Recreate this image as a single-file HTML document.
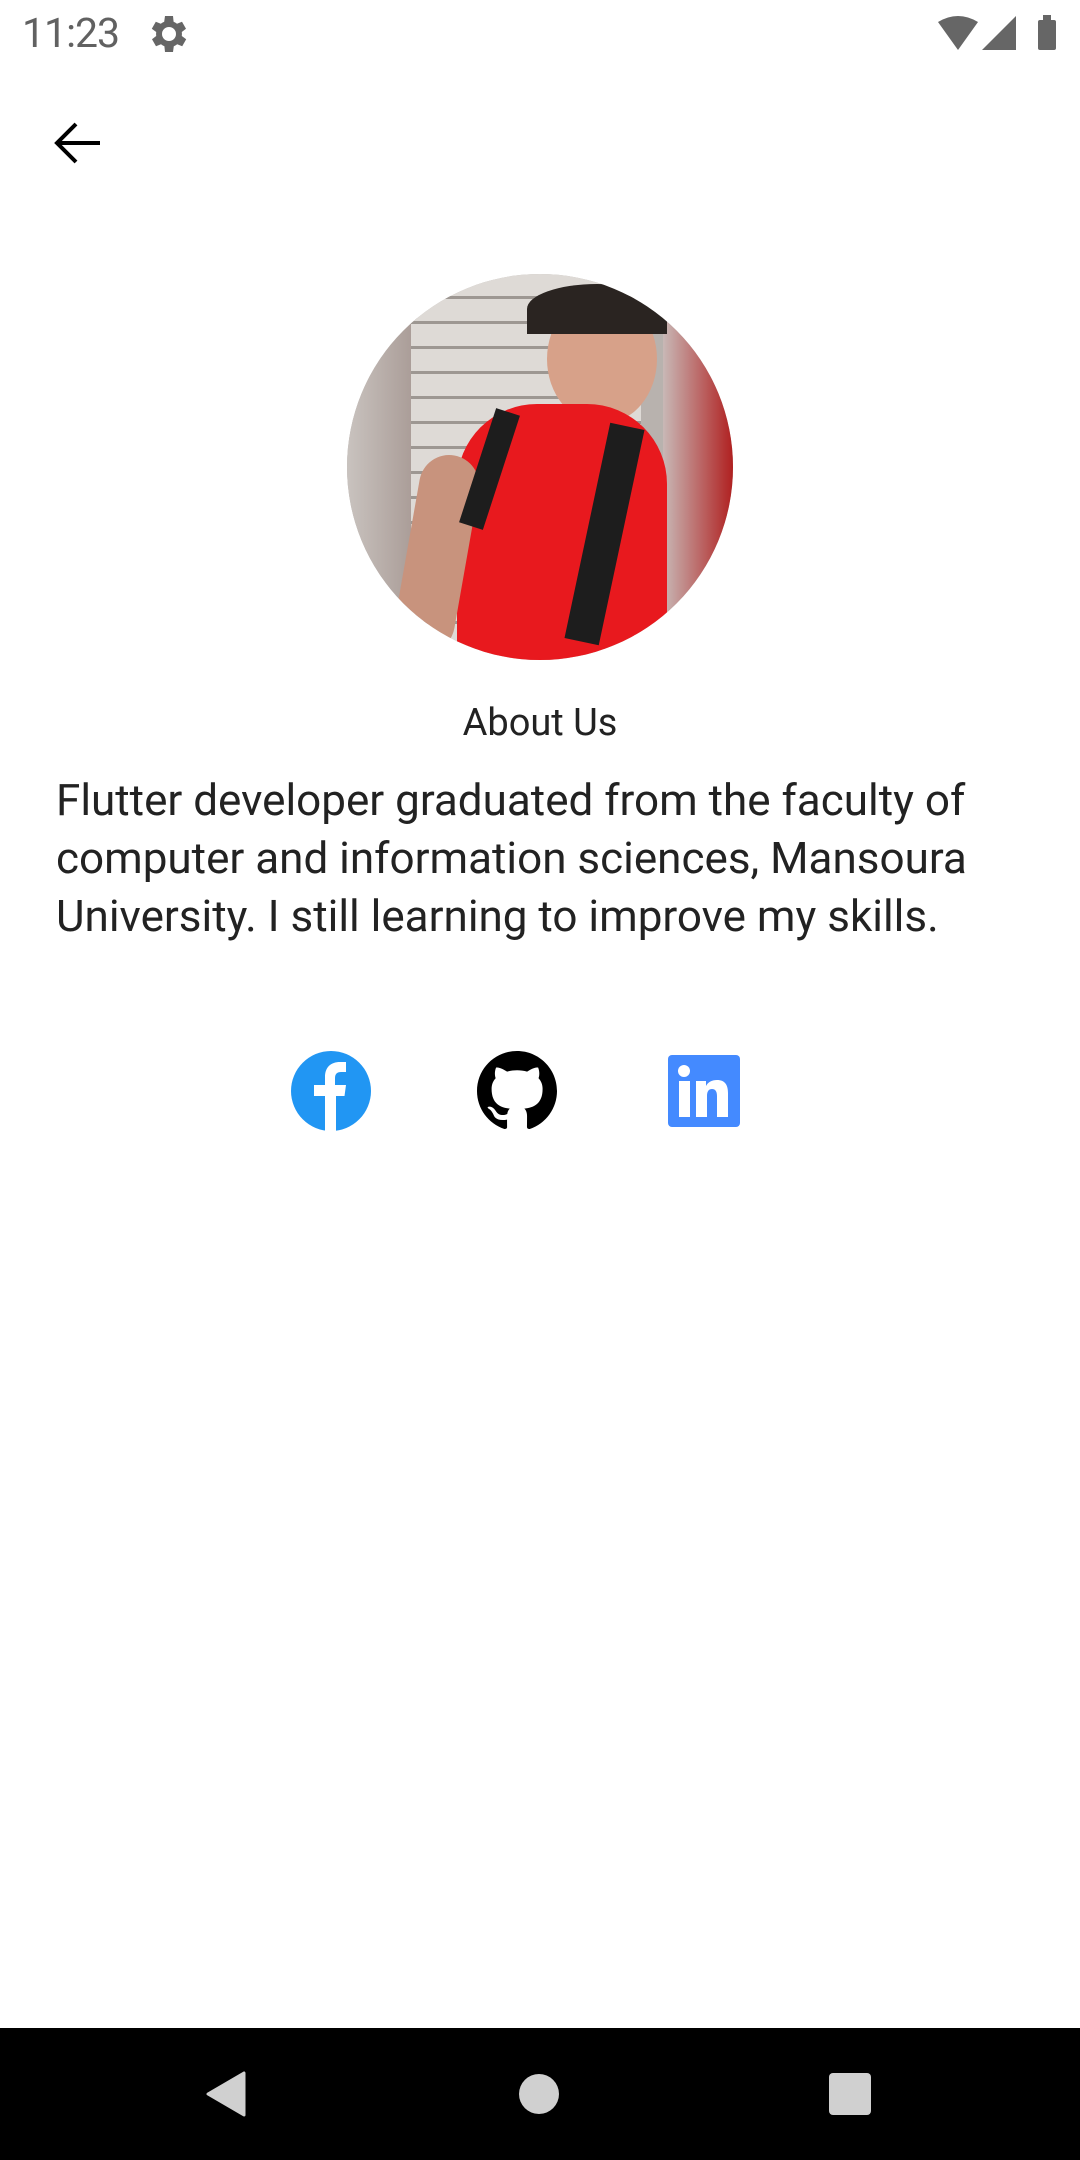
<!DOCTYPE html>
<html><head><meta charset="utf-8"><style>
body{margin:0;width:1080px;height:2160px;background:#fff;position:relative;overflow:hidden;font-family:"Roboto","Liberation Sans",sans-serif}
.abs{position:absolute}
</style></head><body>
<div class="abs" style="left:22px;top:10px;font-size:41px;color:#616161;letter-spacing:-1px">11:23</div>
<svg class="abs" style="left:145px;top:10px" width="48" height="48" viewBox="0 0 24 24"><path fill="#666" d="M19.4 13a7.5 7.5 0 0 0 0-2l2.1-1.6-2-3.5-2.5 1a7 7 0 0 0-1.7-1L15 3h-4l-.4 2.9a7 7 0 0 0-1.7 1l-2.5-1-2 3.5L6.6 11a7.5 7.5 0 0 0 0 2l-2.1 1.6 2 3.5 2.5-1a7 7 0 0 0 1.7 1L11 21h4l.4-2.9a7 7 0 0 0 1.7-1l2.5 1 2-3.5zM13 15.5A3.5 3.5 0 1 1 13 8.5a3.5 3.5 0 0 1 0 7z" transform="translate(-1 0)"/></svg>
<svg class="abs" style="left:936px;top:16px" width="44" height="34" viewBox="0 0 44 34"><path fill="#666" d="M2 6 Q22 -6 42 6 L22 34Z"/></svg>
<svg class="abs" style="left:982px;top:16px" width="36" height="34" viewBox="0 0 36 34"><path fill="#666" d="M34 0V34H0Z"/></svg>
<div class="abs" style="left:1038px;top:20px;width:18px;height:30px;background:#666;border-radius:2px"></div>
<div class="abs" style="left:1043px;top:15px;width:8px;height:6px;background:#666"></div>
<svg class="abs" style="left:52px;top:120px" width="50" height="46" viewBox="0 0 50 46"><path d="M48 23H6M24 4L5 23l19 19" fill="none" stroke="#000" stroke-width="4"/></svg>
<div class="abs" style="left:347px;top:274px;width:386px;height:386px;border-radius:50%;overflow:hidden;background:#b8b2ae">
 <div class="abs" style="left:0;top:0;width:70px;height:386px;background:linear-gradient(90deg,#c9c3bf,#a89a95)"></div>
 <div class="abs" style="left:64px;top:0;width:230px;height:386px;background:repeating-linear-gradient(180deg,#dedad6 0 22px,#9d9792 22px 25px)"></div>
 <div class="abs" style="left:316px;top:0;width:70px;height:386px;background:linear-gradient(90deg,#c8b8b6,#b02020)"></div>
 <div class="abs" style="left:200px;top:20px;width:110px;height:130px;border-radius:50%;background:#d7a189"></div>
 <div class="abs" style="left:180px;top:10px;width:140px;height:50px;border-radius:50% 50% 0 0;background:#2a2421"></div>
 <div class="abs" style="left:110px;top:130px;width:210px;height:270px;border-radius:80px 80px 0 0;background:#e8191e"></div>
 <div class="abs" style="left:60px;top:180px;width:60px;height:200px;border-radius:30px;background:#c8937d;transform:rotate(10deg)"></div>
 <div class="abs" style="left:240px;top:150px;width:35px;height:220px;background:#1d1d1d;transform:rotate(12deg)"></div>
 <div class="abs" style="left:130px;top:135px;width:25px;height:120px;background:#1d1d1d;transform:rotate(18deg)"></div>
</div>
<div class="abs" style="left:0;width:1080px;top:701px;text-align:center;font-size:38px;color:#222">About Us</div>
<div class="abs" style="left:56px;top:771px;font-size:44px;line-height:58px;color:#222;white-space:nowrap">Flutter developer graduated from the faculty of<br>computer and information sciences, Mansoura<br>University. I still learning to improve my skills.</div>
<svg class="abs" style="left:291px;top:1051px" width="80" height="80" viewBox="0 0 80 80"><circle cx="40" cy="40" r="40" fill="#2196f3"/><path fill="#fff" d="M34 80V45H23V34h11v-8c0-10 6-15 15-15 3 0 6 0 6 0v10h-5c-4 0-6 2-6 6v7h11l-1.5 11H45v35z"/></svg>
<svg class="abs" style="left:477px;top:1051px" width="80" height="80" viewBox="0 0 16 16"><path fill="#000" d="M8 0C3.58 0 0 3.58 0 8c0 3.54 2.290 6.53 5.47 7.59.4.07.55-.17.55-.38 0-.19-.01-.82-.01-1.49-2.01.37-2.53-.49-2.690-.94-.09-.23-.48-.94-.82-1.13-.28-.15-.68-.52-.01-.53.63-.01 1.08.58 1.23.82.72 1.21 1.87.87 2.33.66.07-.52.28-.87.51-1.07-1.78-.2-3.64-.89-3.64-3.95 0-.87.31-1.59.82-2.15-.08-.2-.36-1.02.08-2.12 0 0 .67-.21 2.2.82.64-.18 1.32-.27 2-.27.68 0 1.36.09 2 .27 1.53-1.04 2.2-.82 2.2-.82.44 1.1.16 1.92.08 2.12.51.56.82 1.27.82 2.15 0 3.07-1.87 3.75-3.65 3.95.29.25.54.73.54 1.48 0 1.07-.01 1.93-.01 2.2 0 .21.15.46.55.38A8.013 8.013 0 0016 8c0-4.42-3.58-8-8-8z"/></svg>
<svg class="abs" style="left:668px;top:1055px" width="72" height="72" viewBox="0 0 72 72"><rect width="72" height="72" rx="4" fill="#448aff"/><circle cx="16" cy="16" r="6" fill="#fff"/><rect x="11" y="26" width="11" height="36" fill="#fff"/><path fill="#fff" d="M28 26h10v5c2-4 6-6 11-6 8 0 11 5 11 13v24H49V41c0-5-2-7-5-7s-5 2-5 7v21H28z"/></svg>
<div class="abs" style="left:0;top:2028px;width:1080px;height:132px;background:#000"></div>
<svg class="abs" style="left:204px;top:2071px" width="44" height="46" viewBox="0 0 44 46"><path d="M40 2V44L4 23Z" fill="#d0d0d0" stroke="#d0d0d0" stroke-width="3" stroke-linejoin="round"/></svg>
<div class="abs" style="left:519px;top:2074px;width:40px;height:40px;border-radius:50%;background:#d0d0d0"></div>
<div class="abs" style="left:829px;top:2073px;width:42px;height:42px;border-radius:4px;background:#d0d0d0"></div>
</body></html>
